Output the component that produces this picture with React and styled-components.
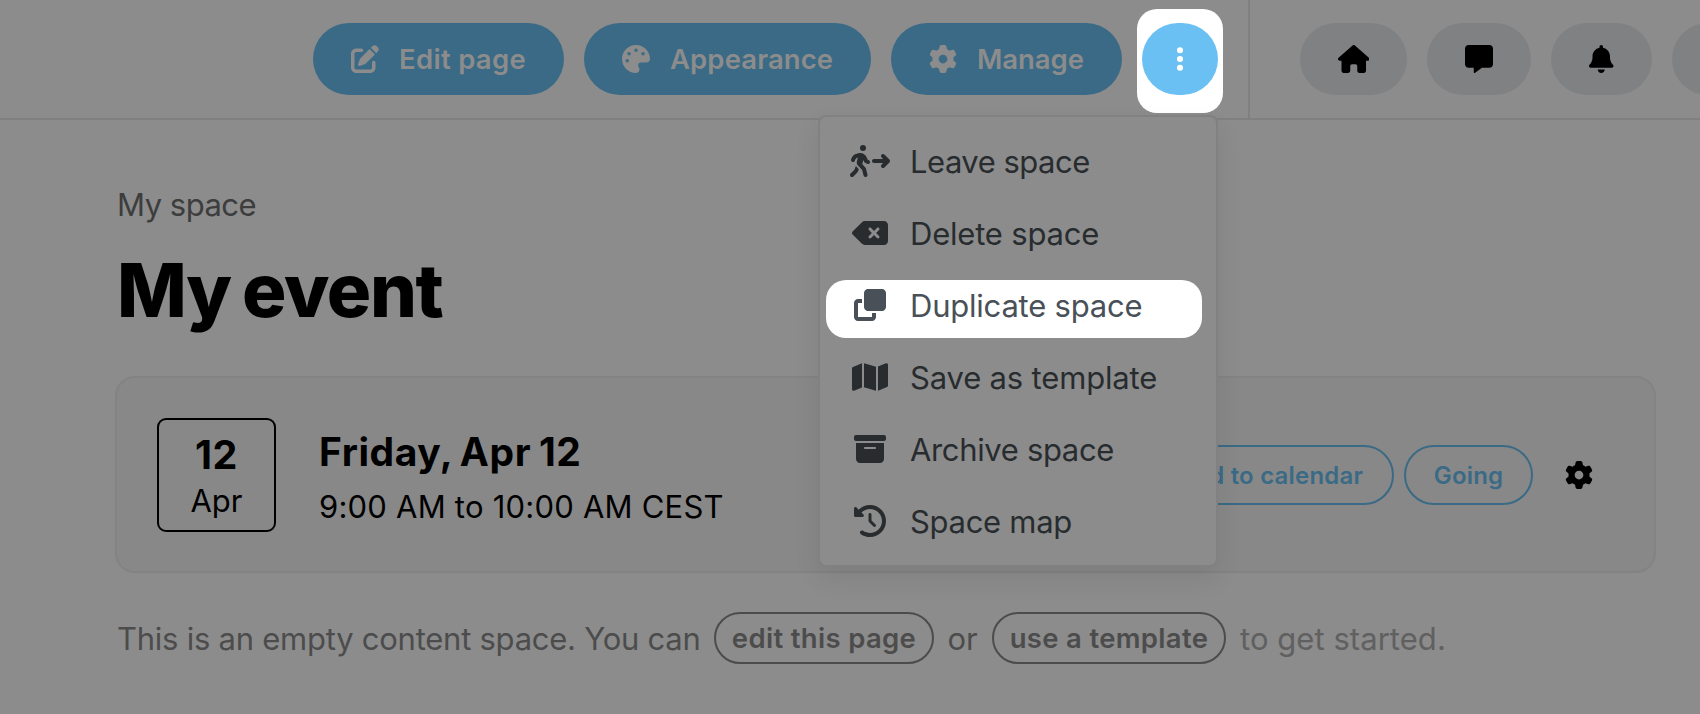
import React from 'react'
import styled, { createGlobalStyle } from 'styled-components'
import {
    FaPenToSquare, FaPalette, FaGear, FaEllipsisVertical, FaHouse, FaMessage, FaBell,
    FaPersonWalkingArrowRight, FaDeleteLeft, FaClone, FaMap, FaBoxArchive, FaClockRotateLeft,
} from 'react-icons/fa6'

const menuItems = [
    { label: 'Leave space', icon: FaPersonWalkingArrowRight, iconWidth: 40, tracking: -0.5 },
    { label: 'Delete space', icon: FaDeleteLeft, iconWidth: 36, tracking: -0.2 },
    { label: 'Duplicate space', icon: FaClone, iconWidth: 32, tracking: -0.22, active: true },
    { label: 'Save as template', icon: FaMap, iconWidth: 36, tracking: -0.17 },
    { label: 'Archive space', icon: FaBoxArchive, iconWidth: 32, tracking: -0.35 },
    { label: 'Space map', icon: FaClockRotateLeft, iconWidth: 32, tracking: -0.3 },
]

const App = () => {
    return (
        <Page>
            <GlobalStyle />
            <TopBar>
                <Actions>
                    <ActionButton $width={251} $tracking={0.3}><FaPenToSquare /><span>Edit page</span></ActionButton>
                    <ActionButton $width={287} $tracking={0.1}><FaPalette /><span>Appearance</span></ActionButton>
                    <ActionButton $width={231} $tracking={-0.05}><FaGear /><span>Manage</span></ActionButton>
                    <Spotlight>
                        <MoreButton><FaEllipsisVertical /></MoreButton>
                    </Spotlight>
                </Actions>
                <Shortcuts>
                    <RoundButton $width={107} $icon={31.5}><FaHouse /></RoundButton>
                    <RoundButton $width={104} $icon={28}><FaMessage /></RoundButton>
                    <RoundButton $width={101} $icon={24.5}><FaBell /></RoundButton>
                    <RoundButton $width={104} />
                </Shortcuts>
                <Menu>
                    {menuItems.map(({ label, icon: Icon, iconWidth, tracking, active }) => (
                        <MenuItem key={label} $active={active}>
                            <MenuIcon $width={iconWidth}><Icon /></MenuIcon>
                            <MenuLabel $tracking={tracking}>{label}</MenuLabel>
                        </MenuItem>
                    ))}
                </Menu>
            </TopBar>
            <Content>
                <Breadcrumb>My space</Breadcrumb>
                <Title>My event</Title>
                <EventCard>
                    <DateBox>
                        <Day>12</Day>
                        <Month>Apr</Month>
                    </DateBox>
                    <EventInfo>
                        <EventDate>Friday, Apr 12</EventDate>
                        <EventTime>9:00 AM to 10:00 AM CEST</EventTime>
                    </EventInfo>
                    <EventActions>
                        <OutlineButton $width={248}>Add to calendar</OutlineButton>
                        <OutlineButton $width={129}>Going</OutlineButton>
                        <Settings><FaGear /></Settings>
                    </EventActions>
                </EventCard>
                <EmptyState>
                    <Hint $width={598}>This is an empty content space. You can</Hint>
                    <HintButton $width={220}>edit this page</HintButton>
                    <HintOr>or</HintOr>
                    <HintButton $width={234}>use a template</HintButton>
                    <HintEnd>to get started.</HintEnd>
                </EmptyState>
            </Content>
        </Page>
    )
}

const GlobalStyle = createGlobalStyle`
    body {
        margin: 0;
        overflow: hidden;
        background: #8c8c8c;
    }
    * {
        box-sizing: border-box;
    }
    button {
        font-family: inherit;
        padding: 0;
        border: 0;
        flex-shrink: 0;
        white-space: nowrap;
    }
    svg {
        display: block;
        flex-shrink: 0;
    }
`

const Page = styled.div`
    width: 1700px;
    height: 714px;
    overflow: hidden;
    background: #8c8c8c;
    color: #000;
    font-family: Inter, "Liberation Sans", sans-serif;
`

const TopBar = styled.header`
    position: relative;
    display: flex;
    height: 120px;
    border-bottom: 2px solid #808080;
`

const Actions = styled.div`
    display: flex;
    align-items: flex-start;
    gap: 20px;
    width: 1250px;
    flex-shrink: 0;
    padding: 23px 0 0 313px;
    border-right: 2px solid #808080;
`

const ActionButton = styled.button`
    display: flex;
    align-items: center;
    gap: 20px;
    width: ${(props) => props.$width}px;
    height: 72px;
    padding-left: 38px;
    border-radius: 36px;
    background: #3a6a85;
    color: #8c8c8c;
    font-size: 27.5px;
    font-weight: 600;
    letter-spacing: ${(props) => props.$tracking}px;
    svg {
        width: 28px;
        height: 28px;
    }
`

const Spotlight = styled.div`
    width: 86px;
    height: 104.5px;
    margin: -14.5px 0 0 -5px;
    padding: 14.5px 5px;
    flex-shrink: 0;
    border-radius: 20px;
    background: #fff;
`

const MoreButton = styled.button`
    display: flex;
    align-items: center;
    justify-content: center;
    width: 76px;
    height: 72px;
    border-radius: 36px;
    background: #6ac0f2;
    color: #fff;
    svg {
        width: 28px;
        height: 28px;
        margin-right: 1px;
    }
`

const Shortcuts = styled.nav`
    display: flex;
    gap: 20px;
    padding: 23px 0 0 50px;
`

const RoundButton = styled.button`
    display: flex;
    align-items: center;
    justify-content: center;
    width: ${(props) => props.$width}px;
    height: 72px;
    border-radius: 36px;
    background: #808183;
    color: #000;
    svg {
        width: ${(props) => props.$icon}px;
        height: 28px;
    }
`

const Menu = styled.div`
    position: absolute;
    z-index: 2;
    top: 115px;
    left: 818px;
    width: 400px;
    height: 452px;
    padding: 8px 0;
    border: 2px solid #818181;
    border-radius: 8px;
    background: #8c8c8c;
    background-clip: padding-box;
    box-shadow: 0 12px 26px rgba(0, 0, 0, 0.08);
`

const MenuItem = styled.div`
    position: relative;
    z-index: 0;
    display: flex;
    align-items: center;
    height: 72px;
    padding-left: 30px;
    color: ${(props) => (props.$active ? '#495057' : '#282c2f')};
    &::before {
        content: "";
        display: ${(props) => (props.$active ? 'block' : 'none')};
        position: absolute;
        z-index: -1;
        top: 10.5px;
        left: 6px;
        width: 376px;
        height: 58px;
        border-radius: 20px;
        background: #fff;
    }
`

const MenuIcon = styled.span`
    display: flex;
    justify-content: center;
    width: 40px;
    svg {
        width: ${(props) => props.$width}px;
        height: 32px;
    }
`

const MenuLabel = styled.span`
    padding: 1px 0 0 20px;
    font-size: 31px;
    letter-spacing: ${(props) => props.$tracking}px;
    white-space: nowrap;
`

const Content = styled.main`
    padding: 66px 44px 0 116px;
`

const Breadcrumb = styled.div`
    padding-left: 1px;
    color: #3d3d3d;
    font-size: 31px;
    line-height: 38px;
    letter-spacing: -0.5px;
`

const Title = styled.h1`
    margin: 21px 0 0;
    padding-left: 1px;
    font-size: 74px;
    font-weight: 800;
    line-height: 90px;
    letter-spacing: -1.35px;
    word-spacing: -3.5px;
`

const EventCard = styled.section`
    display: flex;
    align-items: center;
    width: 1541px;
    height: 197px;
    margin: 41px 0 0 -1px;
    padding: 1px 0 0 40px;
    border: 2px solid #838383;
    border-radius: 20px;
    background: #888;
`

const DateBox = styled.div`
    width: 119px;
    height: 114px;
    padding-top: 13px;
    border: 2px solid #000;
    border-radius: 9px;
    text-align: center;
`

const Day = styled.div`
    font-size: 39.5px;
    font-weight: 700;
    line-height: 44px;
    letter-spacing: 0.5px;
`

const Month = styled.div`
    margin-top: 2px;
    font-size: 31px;
    line-height: 44px;
`

const EventInfo = styled.div`
    padding: 11px 0 0 43px;
`

const EventDate = styled.div`
    font-size: 39px;
    font-weight: 700;
    line-height: 52px;
    letter-spacing: 0.55px;
    word-spacing: -2px;
`

const EventTime = styled.div`
    font-size: 31px;
    line-height: 58px;
    letter-spacing: 0.22px;
`

const EventActions = styled.div`
    display: flex;
    align-items: center;
    gap: 10px;
    margin: 0 61px 0 auto;
`

const OutlineButton = styled.button`
    width: ${(props) => props.$width}px;
    height: 60px;
    border: 2px solid #3a6a85;
    border-radius: 30px;
    background: none;
    color: #3a6a85;
    font-size: 24px;
    font-weight: 600;
    letter-spacing: 0.2px;
`

const Settings = styled.span`
    padding-left: 22px;
    svg {
        width: 28px;
        height: 28px;
    }
`

const EmptyState = styled.div`
    display: flex;
    align-items: center;
    height: 52px;
    margin-top: 39px;
    color: #4c4c4c;
    font-size: 31px;
`

const Hint = styled.span`
    width: ${(props) => props.$width}px;
    flex-shrink: 0;
    padding: 1px 0 0 1px;
    letter-spacing: -0.25px;
    white-space: nowrap;
`

const HintOr = styled(Hint)`
    width: 58px;
    padding: 1px 1px 0 0;
    text-align: center;
`

const HintButton = styled.button`
    width: ${(props) => props.$width}px;
    height: 52px;
    border: 2px solid #4c4c4c;
    border-radius: 26px;
    background: none;
    color: #4c4c4c;
    font-size: 27.5px;
    font-weight: 600;
    letter-spacing: 0.32px;
`

const HintEnd = styled.span`
    padding: 1px 0 0 14px;
    color: #606060;
    letter-spacing: 0.05px;
    white-space: nowrap;
`

export default App
